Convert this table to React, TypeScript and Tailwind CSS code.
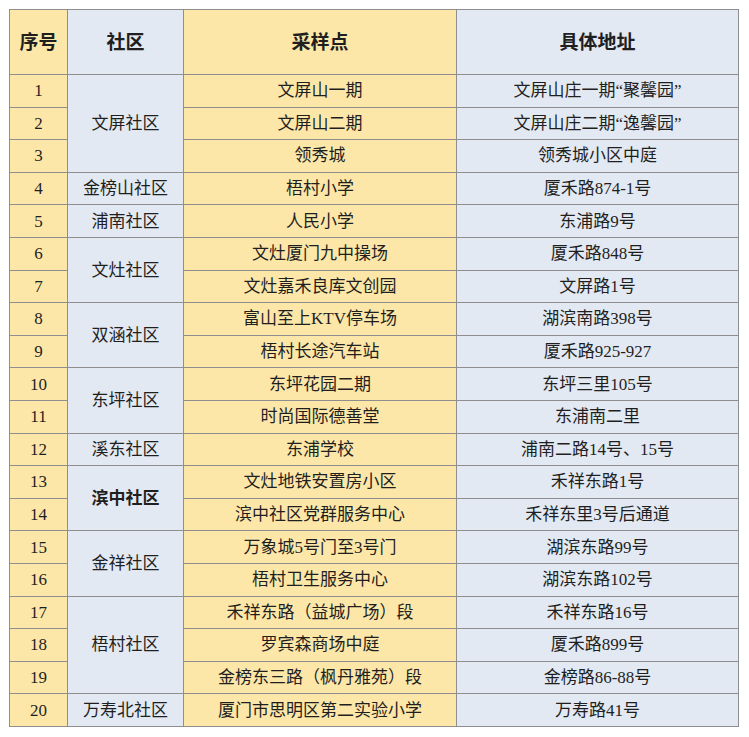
type Row = { no: number; site: string; addr: string };
type Group = { name: string; bold?: boolean; rows: Row[] };

const groups: Group[] = [
  {
    name: "文屏社区",
    rows: [
      { no: 1, site: "文屏山一期", addr: "文屏山庄一期“聚馨园”" },
      { no: 2, site: "文屏山二期", addr: "文屏山庄二期“逸馨园”" },
      { no: 3, site: "领秀城", addr: "领秀城小区中庭" },
    ],
  },
  { name: "金榜山社区", rows: [{ no: 4, site: "梧村小学", addr: "厦禾路874-1号" }] },
  { name: "浦南社区", rows: [{ no: 5, site: "人民小学", addr: "东浦路9号" }] },
  {
    name: "文灶社区",
    rows: [
      { no: 6, site: "文灶厦门九中操场", addr: "厦禾路848号" },
      { no: 7, site: "文灶嘉禾良库文创园", addr: "文屏路1号" },
    ],
  },
  {
    name: "双涵社区",
    rows: [
      { no: 8, site: "富山至上KTV停车场", addr: "湖滨南路398号" },
      { no: 9, site: "梧村长途汽车站", addr: "厦禾路925-927" },
    ],
  },
  {
    name: "东坪社区",
    rows: [
      { no: 10, site: "东坪花园二期", addr: "东坪三里105号" },
      { no: 11, site: "时尚国际德善堂", addr: "东浦南二里" },
    ],
  },
  { name: "溪东社区", rows: [{ no: 12, site: "东浦学校", addr: "浦南二路14号、15号" }] },
  {
    name: "滨中社区",
    bold: true,
    rows: [
      { no: 13, site: "文灶地铁安置房小区", addr: "禾祥东路1号" },
      { no: 14, site: "滨中社区党群服务中心", addr: "禾祥东里3号后通道" },
    ],
  },
  {
    name: "金祥社区",
    rows: [
      { no: 15, site: "万象城5号门至3号门", addr: "湖滨东路99号" },
      { no: 16, site: "梧村卫生服务中心", addr: "湖滨东路102号" },
    ],
  },
  {
    name: "梧村社区",
    rows: [
      { no: 17, site: "禾祥东路（益城广场）段", addr: "禾祥东路16号" },
      { no: 18, site: "罗宾森商场中庭", addr: "厦禾路899号" },
      { no: 19, site: "金榜东三路（枫丹雅苑）段", addr: "金榜路86-88号" },
    ],
  },
  {
    name: "万寿北社区",
    rows: [{ no: 20, site: "厦门市思明区第二实验小学", addr: "万寿路41号" }],
  },
];

const cell = "border border-[#8e8e8e] text-center align-middle p-0";
const yellow = "bg-[#fde7a8]";
const blue = "bg-[#e3e9f2]";

export default function App() {
  return (
    <div
      className="w-[749px] h-[737px] bg-white pt-[9px] pl-[9px] text-[#1f1f1f]"
      style={{ fontFamily: '"Liberation Serif", "Noto Sans CJK SC", serif' }}
    >
      <table className="border-collapse table-fixed w-[729px] text-[17px] leading-none">
        <colgroup>
          <col className="w-[58px]" />
          <col className="w-[116px]" />
          <col className="w-[273px]" />
          <col className="w-[282px]" />
        </colgroup>
        <thead>
          <tr className="h-[65px] text-[19px] font-bold">
            <th className={`${cell} ${yellow}`}>序号</th>
            <th className={`${cell} ${blue}`}>社区</th>
            <th className={`${cell} ${yellow}`}>采样点</th>
            <th className={`${cell} ${blue}`}>具体地址</th>
          </tr>
        </thead>
        <tbody>
          {groups.map((g) =>
            g.rows.map((r, i) => (
              <tr key={r.no} className="h-[32.6px]">
                <td className={`${cell} ${yellow}`}>{r.no}</td>
                {i === 0 && (
                  <td rowSpan={g.rows.length} className={`${cell} ${blue} ${g.bold ? "font-semibold" : ""}`}>
                    {g.name}
                  </td>
                )}
                <td className={`${cell} ${yellow}`}>{r.site}</td>
                <td className={`${cell} ${blue}`}>{r.addr}</td>
              </tr>
            ))
          )}
        </tbody>
      </table>
    </div>
  );
}
